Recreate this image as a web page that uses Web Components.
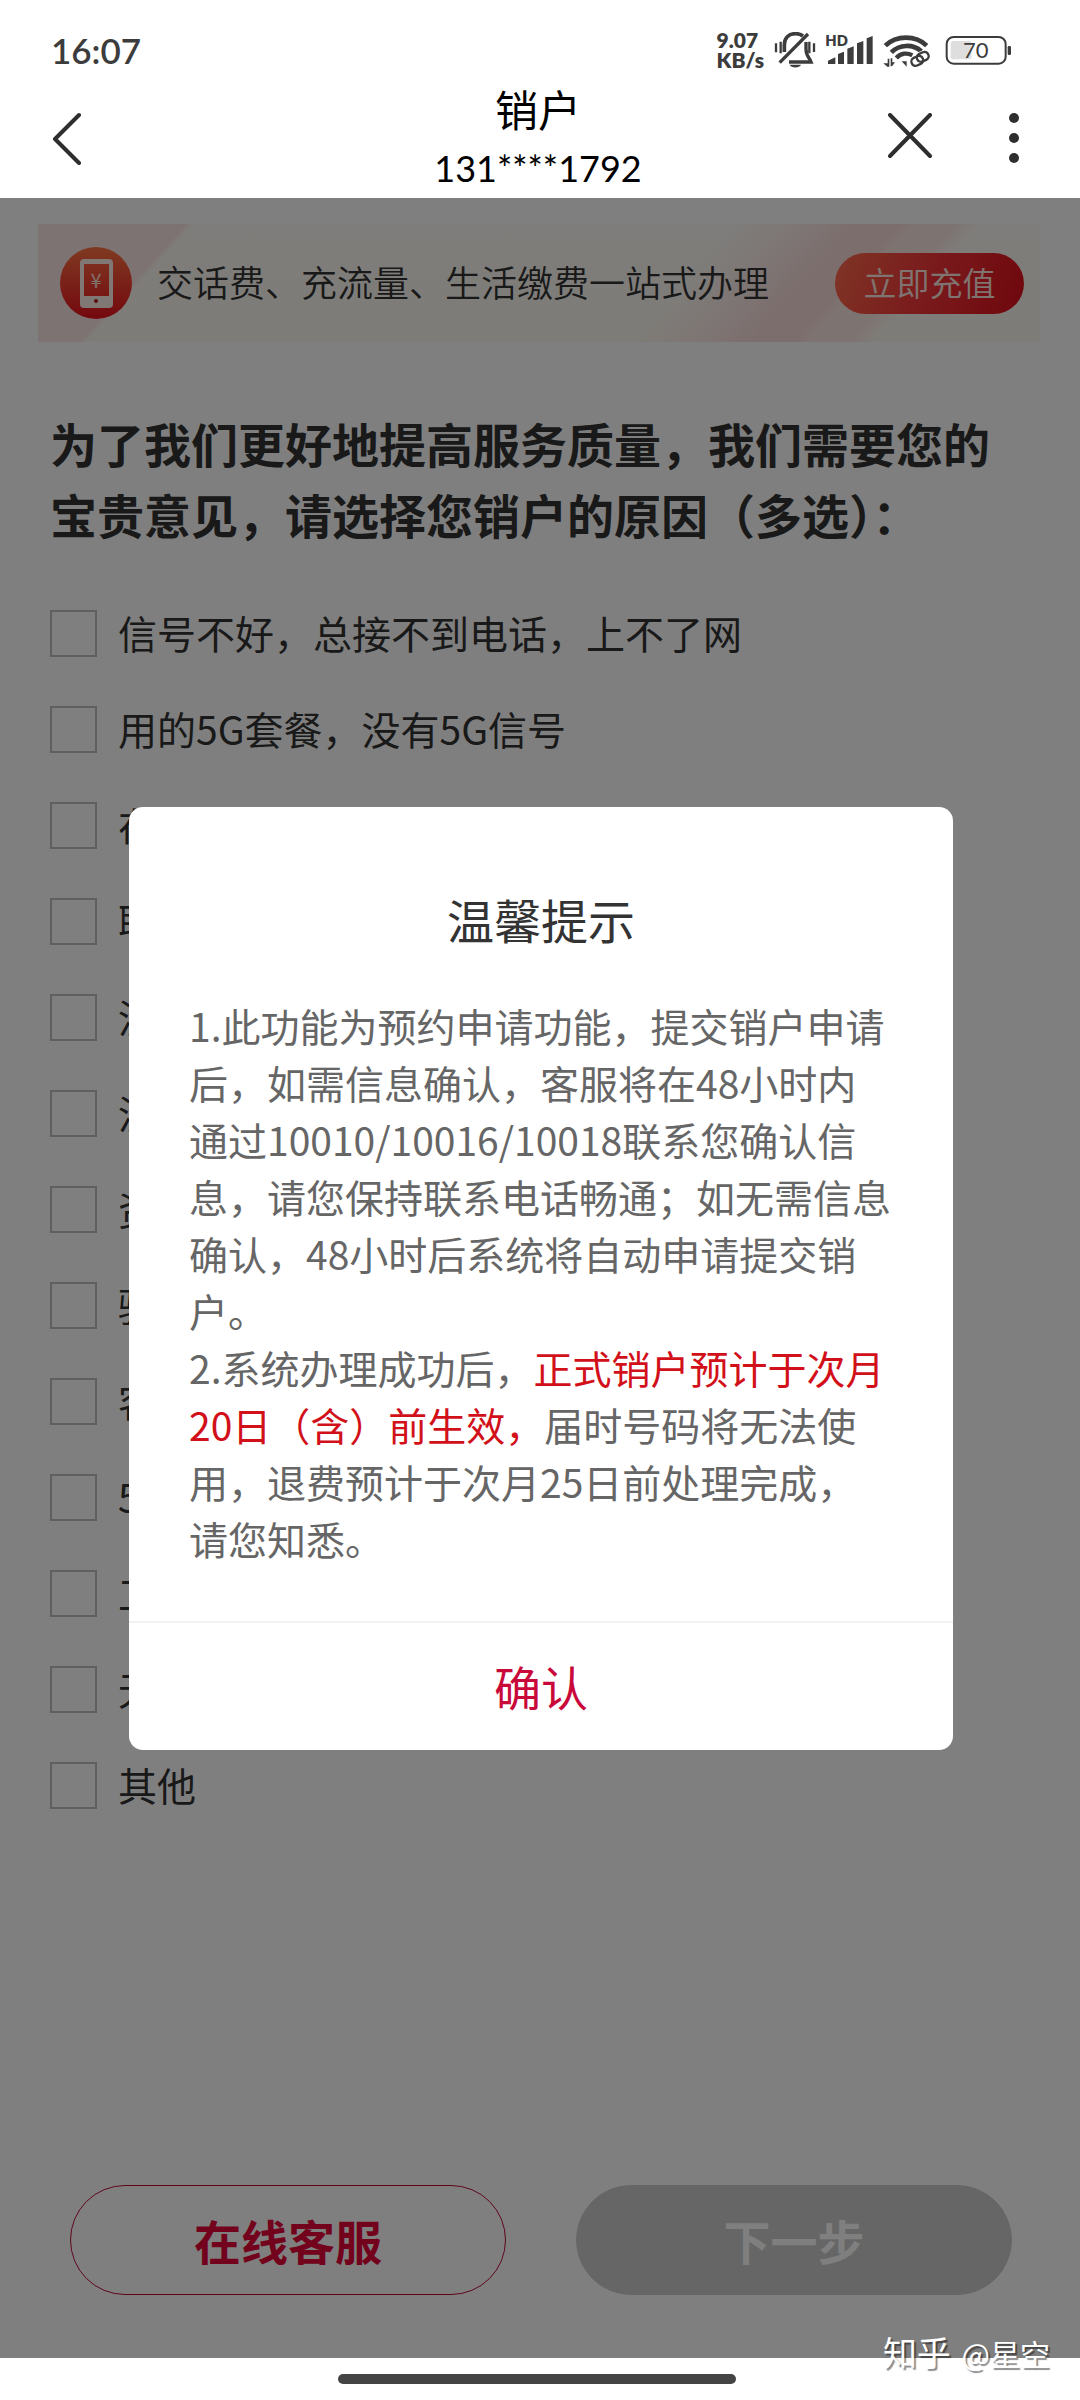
<!DOCTYPE html>
<html lang="zh-CN">
<head>
<meta charset="utf-8">
<meta name="viewport" content="width=device-width, initial-scale=1">
<title>销户</title>
<style>
  body {
    margin: 0;
    background: #fff;
    font-family: "Noto Sans CJK SC", sans-serif;
    color: #333;
  }
</style>
</head>
<body>
<cancel-page></cancel-page>

<script>
class StatusBar extends HTMLElement {
  constructor() {
    super();
    this.attachShadow({ mode: 'open' });
    this.shadowRoot.innerHTML = `
      <style>
        :host {
          display: flex;
          align-items: center;
          justify-content: space-between;
          height: 68px;
          padding: 16px 68px 0 51px;
          color: #3c3c3c;
          font-family: Lato, "Liberation Sans", sans-serif;
        }
        time { font-size: 35px; font-weight: 600; }
        .icons { display: flex; align-items: center; gap: 10px; }
        .speed { font-size: 21px; line-height: 20px; font-weight: 800; }
        svg { display: block; }
        svg text { font-family: Lato, sans-serif; }
        .battery { margin-left: 4px; }
      </style>
      <time>16:07</time>
      <div class="icons">
        <div class="speed">9.07<br>KB/s</div>
        <svg width="42" height="36" viewBox="216 36 126 108" fill="none" stroke="currentColor" stroke-width="9">
          <path d="M222 70v27M236 65v35M322 65v35M336 70v26" stroke-width="7"/>
          <path d="M247 96V76c0-24 14-35 34-35 9 0 16 2 22 7" stroke-width="11"/>
          <path d="M312 66v22c0 14 5 22 12 31l3 7h-66" stroke-width="10"/>
          <path d="M318 42L233 128" stroke-width="10"/>
          <path d="M263 134h34c-4 11-30 11-34 0z" fill="currentColor" stroke="none"/>
        </svg>
        <svg width="47" height="36" viewBox="375 36 141 108" fill="currentColor">
          <text x="373" y="77" font-size="44" font-weight="800">HD</text>
          <path d="M381 132v-10l22-10v20zM411 132v-30l18-7v37zM439 132V86l19-7v53zM468 132V70l19-7v69zM497 132V55l18-7v84z"/>
        </svg>
        <svg width="47" height="36" viewBox="550 36 141 108" fill="none" stroke="currentColor">
          <path d="M557 77c33-32 91-32 124 0" stroke-width="14"/>
          <path d="M575 97c24-24 64-26 90-3" stroke-width="14"/>
          <path d="M590 114c14-16 34-16 48-8" stroke-width="13"/>
          <path d="M606 124h15v16zM551 130h13v-14h5v24h-6zM573 115h5v12h8l-9 12h-4z" fill="currentColor" stroke="none"/>
          <rect x="643" y="104" width="38" height="26" rx="13" transform="rotate(-24 661 117)" stroke="#fff" stroke-width="16"/>
          <rect x="635" y="110" width="36" height="25" rx="12" transform="rotate(-24 653 123)" stroke-width="7"/>
          <rect x="651" y="98" width="36" height="25" rx="12" transform="rotate(-24 669 110)" stroke-width="7"/>
        </svg>
        <svg class="battery" width="68" height="36" viewBox="732 33 204 108">
          <rect x="752" y="60" width="62" height="55" rx="8" fill="#dedede"/>
          <rect x="740" y="48" width="177" height="80" rx="21" fill="none" stroke="currentColor" stroke-width="6"/>
          <rect x="923" y="75" width="10" height="27" rx="4" fill="currentColor"/>
          <text x="827" y="111" text-anchor="middle" font-size="66" fill="currentColor">70</text>
        </svg>
      </div>
    `;
  }
}

class NavBar extends HTMLElement {
  constructor() {
    super();
    this.attachShadow({ mode: 'open' });
    this.shadowRoot.innerHTML = `
      <style>
        :host {
          display: grid;
          grid-template-columns: 1fr auto 1fr;
          align-items: center;
          height: 114px;
          padding: 0 56px 0 52px;
          color: #2e2e2e;
        }
        button {
          display: block;
          padding: 0 0 6px;
          border: 0;
          background: none;
          color: inherit;
        }
        svg { display: block; }
        .title { text-align: center; color: #000; }
        h1 { margin: 0 0 6px; font-size: 43px; line-height: 48px; font-weight: 400; }
        .number {
          font: 36px/60px Lato, "Liberation Sans", sans-serif;
        }
        .actions { display: flex; justify-content: flex-end; align-items: center; gap: 72px; }
      </style>
      <button aria-label="返回">
        <svg width="30" height="54" fill="none" stroke="currentColor" stroke-width="4" stroke-linecap="round" stroke-linejoin="round">
          <path d="M27 4L3 28l24 24"/>
        </svg>
      </button>
      <div class="title">
        <h1><slot></slot></h1>
        <div class="number"><slot name="number"></slot></div>
      </div>
      <div class="actions">
        <button aria-label="关闭">
          <svg width="44" height="50" fill="none" stroke="currentColor" stroke-width="4" stroke-linecap="round">
            <path d="M2 2l40 41M42 2L2 43"/>
          </svg>
        </button>
        <button aria-label="更多">
          <svg width="20" height="50" fill="currentColor">
            <circle cx="10" cy="5" r="5"/><circle cx="10" cy="25" r="5"/><circle cx="10" cy="45" r="5"/>
          </svg>
        </button>
      </div>
    `;
  }
}

class PromoBanner extends HTMLElement {
  constructor() {
    super();
    this.attachShadow({ mode: 'open' });
    this.shadowRoot.innerHTML = `
      <style>
        :host {
          display: flex;
          align-items: center;
          height: 118px;
          margin: 0 40px 0 38px;
          padding: 0 16px 0 22px;
          background:
            linear-gradient(132deg, #fde6e6 0 110px, transparent 115px),
            linear-gradient(132deg, transparent 520px, #fbe8e5 580px, #f8dcda 610px 640px, #fbe6e2 650px 680px, transparent 700px),
            linear-gradient(#fdfaf6, #fdf9f0);
        }
        svg { flex: none; display: block; margin-right: 24px; }
        span {
          flex: 1;
          padding-bottom: 4px;
          font-size: 36px;
          line-height: 52px;
          font-weight: 350;
          white-space: nowrap;
        }
        button {
          flex: none;
          width: 189px;
          height: 61px;
          padding: 0 0 2px;
          border: 0;
          border-radius: 31px;
          background: linear-gradient(110deg, #ff6a4c, #f43438 50%, #dd0f1c);
          color: #ffe9e0;
          font: 350 33px/48px "Noto Sans CJK SC", sans-serif;
        }
      </style>
      <svg width="73" height="73" viewBox="0 0 73 73">
        <defs>
          <linearGradient id="disc" x2="0" y2="1">
            <stop offset="0" stop-color="#ff7442"/>
            <stop offset="1" stop-color="#e8101e"/>
          </linearGradient>
        </defs>
        <circle cx="36" cy="36" r="36" fill="url(#disc)"/>
        <path fill-rule="evenodd" fill="#fff0ea" d="M24 12h25q4 0 4 4v41q0 4-4 4H24q-4 0-4-4V16q0-4 4-4zM24 17v32h25V17z"/>
        <circle cx="36" cy="54" r="2" fill="#b02018"/>
        <text x="36" y="41" text-anchor="middle" font-size="20" fill="#ffe3da">¥</text>
      </svg>
      <span><slot></slot></span>
      <button><slot name="action"></slot></button>
    `;
  }
}

class ReasonOption extends HTMLElement {
  constructor() {
    super();
    this.attachShadow({ mode: 'open' });
    this.shadowRoot.innerHTML = `
      <style>
        :host { display: block; }
        label { display: flex; align-items: center; gap: 21px; height: 96px; font-size: 39px; line-height: 56px; }
        span { padding-bottom: 2px; }
        input {
          appearance: none;
          flex: none;
          width: 47px;
          height: 47px;
          margin: 0;
          border: 2px solid #bebebe;
        }
      </style>
      <label><input type="checkbox"><span><slot></slot></span></label>
    `;
  }
}

class PillButton extends HTMLElement {
  constructor() {
    super();
    this.attachShadow({ mode: 'open' });
    this.shadowRoot.innerHTML = `
      <style>
        :host { display: block; flex: 1; }
        button {
          display: block;
          width: 100%;
          height: 110px;
          border: 1px solid #c00a36;
          border-radius: 55px;
          background: none;
          color: #e6053a;
          font: 700 47px/68px "Noto Sans CJK SC", sans-serif;
        }
        button:disabled { border-color: #ccc; background: #ccc; color: #fff; }
      </style>
      <button><slot></slot></button>
    `;
  }

  connectedCallback() {
    this.shadowRoot.querySelector('button').disabled = this.hasAttribute('disabled');
  }
}

class TipDialog extends HTMLElement {
  constructor() {
    super();
    this.attachShadow({ mode: 'open' });
    this.shadowRoot.innerHTML = `
      <style>
        :host {
          position: absolute;
          inset: 0;
          display: flex;
          align-items: center;
          justify-content: center;
          padding-left: 2px;
          background: rgba(0, 0, 0, 0.5);
        }
        section {
          width: calc(100% - 254px);
          border-radius: 14px;
          background: #fff;
          overflow: hidden;
        }
        h2 {
          margin: 0;
          padding-top: 78px;
          font-size: 47px;
          line-height: 68px;
          font-weight: 400;
          text-align: center;
        }
        .text { padding: 44px 60px 54px; font-size: 39px; line-height: 57px; color: #666; }
        button {
          display: block;
          width: 100%;
          height: 129px;
          border: 0;
          border-top: 2px solid #f2f2f2;
          background: none;
          color: #c8093a;
          font: 47px/68px "Noto Sans CJK SC", sans-serif;
        }
      </style>
      <section role="dialog" aria-labelledby="title">
        <h2 id="title"><slot name="title"></slot></h2>
        <div class="text"><slot></slot></div>
        <button>确认</button>
      </section>
    `;
    this.shadowRoot.querySelector('button').addEventListener('click', () => this.remove());
  }
}

class HomeBar extends HTMLElement {
  constructor() {
    super();
    this.attachShadow({ mode: 'open' });
    this.shadowRoot.innerHTML = `
      <style>
        :host { display: flex; justify-content: center; padding: 16px 6px 16px 0; background: #fff; }
        div { width: 37%; height: 10px; border-radius: 5px; background: #444; }
      </style>
      <div></div>
    `;
  }
}

class WaterMark extends HTMLElement {
  constructor() {
    super();
    this.attachShadow({ mode: 'open' });
    this.shadowRoot.innerHTML = `
      <style>
        :host {
          position: absolute;
          right: 30px;
          bottom: 23px;
          color: #fff;
          font-size: 30px;
          line-height: 48px;
          text-shadow: 2px 2px 1px rgba(0, 0, 0, 0.45);
          white-space: nowrap;
        }
        b { margin-right: 4px; font-size: 34px; font-weight: 400; }
      </style>
      <b>知乎</b> <slot></slot>
    `;
  }
}

class CancelPage extends HTMLElement {
  constructor() {
    super();
    this.attachShadow({ mode: 'open' });
    this.shadowRoot.innerHTML = `
      <style>
        :host { position: relative; display: flex; flex-direction: column; min-height: 100vh; }
        main { position: relative; flex: 1; display: flex; flex-direction: column; padding-top: 26px; }
        h2 { margin: 65px 51px 0 50px; font-size: 47px; line-height: 71px; font-weight: 700; }
        .reasons { margin: 36px 50px 0; }
        .buttons { display: flex; gap: 70px; margin-top: auto; padding: 40px 68px 63px 70px; }
        mark { background: none; color: #d2101a; }
      </style>
      <status-bar></status-bar>
      <nav-bar>销户<span slot="number">131****1792</span></nav-bar>
      <main>
        <promo-banner>交话费、充流量、生活缴费一站式办理<span slot="action">立即充值</span></promo-banner>
        <h2>为了我们更好地提高服务质量，我们需要您的宝贵意见，请选择您销户的原因（多选）：</h2>
        <div class="reasons">
          <reason-option>信号不好，总接不到电话，上不了网</reason-option>
          <reason-option>用的5G套餐，没有5G信号</reason-option>
          <reason-option>在</reason-option>
          <reason-option>联</reason-option>
          <reason-option>没</reason-option>
          <reason-option>没</reason-option>
          <reason-option>资</reason-option>
          <reason-option>骚</reason-option>
          <reason-option>客</reason-option>
          <reason-option>5</reason-option>
          <reason-option>工</reason-option>
          <reason-option>无</reason-option>
          <reason-option>其他</reason-option>
        </div>
        <div class="buttons">
          <pill-button>在线客服</pill-button>
          <pill-button disabled>下一步</pill-button>
        </div>
        <tip-dialog>
          <span slot="title">温馨提示</span>
          1.此功能为预约申请功能，提交销户申请后，如需信息确认，客服将在48小时内通过10010/10016/10018联系您确认信息，请您保持联系电话畅通；如无需信息确认，48小时后系统将自动申请提交销户。<br>
          2.系统办理成功后，<mark>正式销户预计于次月20日（含）前生效，</mark>届时号码将无法使用，退费预计于次月25日前处理完成，请您知悉。
        </tip-dialog>
      </main>
      <home-bar></home-bar>
      <water-mark>@星空</water-mark>
    `;
  }
}

customElements.define('status-bar', StatusBar);
customElements.define('nav-bar', NavBar);
customElements.define('promo-banner', PromoBanner);
customElements.define('reason-option', ReasonOption);
customElements.define('pill-button', PillButton);
customElements.define('tip-dialog', TipDialog);
customElements.define('home-bar', HomeBar);
customElements.define('water-mark', WaterMark);
customElements.define('cancel-page', CancelPage);
</script>
</body>
</html>
